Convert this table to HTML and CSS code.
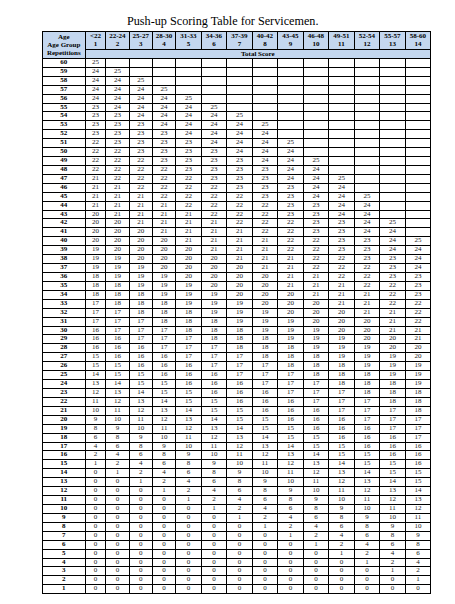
FILE: index.html
```html
<!DOCTYPE html>
<html lang="en">
<head>
<meta charset="utf-8">
<title>Push-up Scoring Table for Servicemen</title>
<link rel="stylesheet" href="styles.css">
</head>
<body>
<div class="page">
<h1 class="title">Push-up Scoring Table for Servicemen.</h1>
<table class="score">
<colgroup>
<col class="c-lab"><col class="c1"><col class="c2"><col class="c2"><col class="c2"><col class="c3"><col class="c3"><col class="c3"><col class="c3"><col class="c3"><col class="c3"><col class="c3"><col class="c3"><col class="c3"><col class="c3">
</colgroup>
<thead>
<tr><th class="corner" rowspan="2">Age<br>Age Group<br>Repetitions</th><th class="grp">&lt;22<br>1</th><th class="grp">22-24<br>2</th><th class="grp">25-27<br>3</th><th class="grp">28-30<br>4</th><th class="grp">31-33<br>5</th><th class="grp">34-36<br>6</th><th class="grp">37-39<br>7</th><th class="grp">40-42<br>8</th><th class="grp">43-45<br>9</th><th class="grp">46-48<br>10</th><th class="grp">49-51<br>11</th><th class="grp">52-54<br>12</th><th class="grp">55-57<br>13</th><th class="grp">58-60<br>14</th></tr>
<tr><th class="total" colspan="14">Total Score</th></tr>
</thead>
<tbody>
<tr><th>60</th><td>25</td><td></td><td></td><td></td><td></td><td></td><td></td><td></td><td></td><td></td><td></td><td></td><td></td><td></td></tr>
<tr><th>59</th><td>24</td><td>25</td><td></td><td></td><td></td><td></td><td></td><td></td><td></td><td></td><td></td><td></td><td></td><td></td></tr>
<tr><th>58</th><td>24</td><td>24</td><td>25</td><td></td><td></td><td></td><td></td><td></td><td></td><td></td><td></td><td></td><td></td><td></td></tr>
<tr><th>57</th><td>24</td><td>24</td><td>24</td><td>25</td><td></td><td></td><td></td><td></td><td></td><td></td><td></td><td></td><td></td><td></td></tr>
<tr><th>56</th><td>24</td><td>24</td><td>24</td><td>24</td><td>25</td><td></td><td></td><td></td><td></td><td></td><td></td><td></td><td></td><td></td></tr>
<tr><th>55</th><td>23</td><td>24</td><td>24</td><td>24</td><td>24</td><td>25</td><td></td><td></td><td></td><td></td><td></td><td></td><td></td><td></td></tr>
<tr><th>54</th><td>23</td><td>23</td><td>24</td><td>24</td><td>24</td><td>24</td><td>25</td><td></td><td></td><td></td><td></td><td></td><td></td><td></td></tr>
<tr><th>53</th><td>23</td><td>23</td><td>23</td><td>24</td><td>24</td><td>24</td><td>24</td><td>25</td><td></td><td></td><td></td><td></td><td></td><td></td></tr>
<tr><th>52</th><td>23</td><td>23</td><td>23</td><td>23</td><td>24</td><td>24</td><td>24</td><td>24</td><td></td><td></td><td></td><td></td><td></td><td></td></tr>
<tr><th>51</th><td>22</td><td>23</td><td>23</td><td>23</td><td>23</td><td>24</td><td>24</td><td>24</td><td>25</td><td></td><td></td><td></td><td></td><td></td></tr>
<tr><th>50</th><td>22</td><td>22</td><td>23</td><td>23</td><td>23</td><td>23</td><td>24</td><td>24</td><td>24</td><td></td><td></td><td></td><td></td><td></td></tr>
<tr><th>49</th><td>22</td><td>22</td><td>22</td><td>23</td><td>23</td><td>23</td><td>23</td><td>24</td><td>24</td><td>25</td><td></td><td></td><td></td><td></td></tr>
<tr><th>48</th><td>22</td><td>22</td><td>22</td><td>22</td><td>23</td><td>23</td><td>23</td><td>23</td><td>24</td><td>24</td><td></td><td></td><td></td><td></td></tr>
<tr><th>47</th><td>21</td><td>22</td><td>22</td><td>22</td><td>22</td><td>23</td><td>23</td><td>23</td><td>24</td><td>24</td><td>25</td><td></td><td></td><td></td></tr>
<tr><th>46</th><td>21</td><td>21</td><td>22</td><td>22</td><td>22</td><td>22</td><td>23</td><td>23</td><td>23</td><td>24</td><td>24</td><td></td><td></td><td></td></tr>
<tr><th>45</th><td>21</td><td>21</td><td>21</td><td>22</td><td>22</td><td>22</td><td>22</td><td>23</td><td>23</td><td>24</td><td>24</td><td>25</td><td></td><td></td></tr>
<tr><th>44</th><td>21</td><td>21</td><td>21</td><td>21</td><td>22</td><td>22</td><td>22</td><td>22</td><td>23</td><td>23</td><td>24</td><td>24</td><td></td><td></td></tr>
<tr><th>43</th><td>20</td><td>21</td><td>21</td><td>21</td><td>21</td><td>22</td><td>22</td><td>22</td><td>23</td><td>23</td><td>24</td><td>24</td><td></td><td></td></tr>
<tr><th>42</th><td>20</td><td>20</td><td>21</td><td>21</td><td>21</td><td>21</td><td>22</td><td>22</td><td>22</td><td>23</td><td>23</td><td>24</td><td>25</td><td></td></tr>
<tr><th>41</th><td>20</td><td>20</td><td>20</td><td>21</td><td>21</td><td>21</td><td>21</td><td>22</td><td>22</td><td>23</td><td>23</td><td>24</td><td>24</td><td></td></tr>
<tr><th>40</th><td>20</td><td>20</td><td>20</td><td>20</td><td>21</td><td>21</td><td>21</td><td>21</td><td>22</td><td>22</td><td>23</td><td>23</td><td>24</td><td>25</td></tr>
<tr><th>39</th><td>19</td><td>20</td><td>20</td><td>20</td><td>20</td><td>21</td><td>21</td><td>21</td><td>22</td><td>22</td><td>23</td><td>23</td><td>24</td><td>24</td></tr>
<tr><th>38</th><td>19</td><td>19</td><td>20</td><td>20</td><td>20</td><td>20</td><td>21</td><td>21</td><td>21</td><td>22</td><td>22</td><td>23</td><td>23</td><td>24</td></tr>
<tr><th>37</th><td>19</td><td>19</td><td>19</td><td>20</td><td>20</td><td>20</td><td>20</td><td>21</td><td>21</td><td>22</td><td>22</td><td>22</td><td>23</td><td>24</td></tr>
<tr><th>36</th><td>18</td><td>19</td><td>19</td><td>19</td><td>20</td><td>20</td><td>20</td><td>20</td><td>21</td><td>21</td><td>22</td><td>22</td><td>23</td><td>23</td></tr>
<tr><th>35</th><td>18</td><td>18</td><td>19</td><td>19</td><td>19</td><td>20</td><td>20</td><td>20</td><td>21</td><td>21</td><td>21</td><td>22</td><td>22</td><td>23</td></tr>
<tr><th>34</th><td>18</td><td>18</td><td>18</td><td>19</td><td>19</td><td>19</td><td>20</td><td>20</td><td>20</td><td>21</td><td>21</td><td>21</td><td>22</td><td>23</td></tr>
<tr><th>33</th><td>17</td><td>18</td><td>18</td><td>18</td><td>19</td><td>19</td><td>19</td><td>20</td><td>20</td><td>20</td><td>21</td><td>21</td><td>22</td><td>22</td></tr>
<tr><th>32</th><td>17</td><td>17</td><td>18</td><td>18</td><td>18</td><td>19</td><td>19</td><td>19</td><td>20</td><td>20</td><td>20</td><td>21</td><td>21</td><td>22</td></tr>
<tr><th>31</th><td>17</td><td>17</td><td>17</td><td>18</td><td>18</td><td>18</td><td>19</td><td>19</td><td>19</td><td>20</td><td>20</td><td>20</td><td>21</td><td>22</td></tr>
<tr><th>30</th><td>16</td><td>17</td><td>17</td><td>17</td><td>18</td><td>18</td><td>18</td><td>19</td><td>19</td><td>19</td><td>20</td><td>20</td><td>21</td><td>21</td></tr>
<tr><th>29</th><td>16</td><td>16</td><td>17</td><td>17</td><td>17</td><td>18</td><td>18</td><td>18</td><td>19</td><td>19</td><td>19</td><td>20</td><td>20</td><td>21</td></tr>
<tr><th>28</th><td>16</td><td>16</td><td>16</td><td>17</td><td>17</td><td>17</td><td>18</td><td>18</td><td>18</td><td>19</td><td>19</td><td>19</td><td>20</td><td>20</td></tr>
<tr><th>27</th><td>15</td><td>16</td><td>16</td><td>16</td><td>17</td><td>17</td><td>17</td><td>18</td><td>18</td><td>18</td><td>19</td><td>19</td><td>19</td><td>20</td></tr>
<tr><th>26</th><td>15</td><td>15</td><td>16</td><td>16</td><td>16</td><td>17</td><td>17</td><td>17</td><td>18</td><td>18</td><td>18</td><td>19</td><td>19</td><td>19</td></tr>
<tr><th>25</th><td>14</td><td>15</td><td>15</td><td>16</td><td>16</td><td>16</td><td>17</td><td>17</td><td>17</td><td>18</td><td>18</td><td>18</td><td>19</td><td>19</td></tr>
<tr><th>24</th><td>13</td><td>14</td><td>15</td><td>15</td><td>16</td><td>16</td><td>16</td><td>17</td><td>17</td><td>17</td><td>18</td><td>18</td><td>18</td><td>19</td></tr>
<tr><th>23</th><td>12</td><td>13</td><td>14</td><td>15</td><td>15</td><td>16</td><td>16</td><td>16</td><td>17</td><td>17</td><td>17</td><td>18</td><td>18</td><td>18</td></tr>
<tr><th>22</th><td>11</td><td>12</td><td>13</td><td>14</td><td>15</td><td>15</td><td>16</td><td>16</td><td>16</td><td>17</td><td>17</td><td>17</td><td>18</td><td>18</td></tr>
<tr><th>21</th><td>10</td><td>11</td><td>12</td><td>13</td><td>14</td><td>15</td><td>15</td><td>16</td><td>16</td><td>16</td><td>17</td><td>17</td><td>17</td><td>18</td></tr>
<tr><th>20</th><td>9</td><td>10</td><td>11</td><td>12</td><td>13</td><td>14</td><td>15</td><td>15</td><td>16</td><td>16</td><td>16</td><td>17</td><td>17</td><td>17</td></tr>
<tr><th>19</th><td>8</td><td>9</td><td>10</td><td>11</td><td>12</td><td>13</td><td>14</td><td>15</td><td>15</td><td>16</td><td>16</td><td>16</td><td>17</td><td>17</td></tr>
<tr><th>18</th><td>6</td><td>8</td><td>9</td><td>10</td><td>11</td><td>12</td><td>13</td><td>14</td><td>15</td><td>15</td><td>16</td><td>16</td><td>16</td><td>17</td></tr>
<tr><th>17</th><td>4</td><td>6</td><td>8</td><td>9</td><td>10</td><td>11</td><td>12</td><td>13</td><td>14</td><td>15</td><td>15</td><td>16</td><td>16</td><td>16</td></tr>
<tr><th>16</th><td>2</td><td>4</td><td>6</td><td>8</td><td>9</td><td>10</td><td>11</td><td>12</td><td>13</td><td>14</td><td>15</td><td>15</td><td>16</td><td>16</td></tr>
<tr><th>15</th><td>1</td><td>2</td><td>4</td><td>6</td><td>8</td><td>9</td><td>10</td><td>11</td><td>12</td><td>13</td><td>14</td><td>15</td><td>15</td><td>16</td></tr>
<tr><th>14</th><td>0</td><td>1</td><td>2</td><td>4</td><td>6</td><td>8</td><td>9</td><td>10</td><td>11</td><td>12</td><td>13</td><td>14</td><td>15</td><td>15</td></tr>
<tr><th>13</th><td>0</td><td>0</td><td>1</td><td>2</td><td>4</td><td>6</td><td>8</td><td>9</td><td>10</td><td>11</td><td>12</td><td>13</td><td>14</td><td>15</td></tr>
<tr><th>12</th><td>0</td><td>0</td><td>0</td><td>1</td><td>2</td><td>4</td><td>6</td><td>8</td><td>9</td><td>10</td><td>11</td><td>12</td><td>13</td><td>14</td></tr>
<tr><th>11</th><td>0</td><td>0</td><td>0</td><td>0</td><td>1</td><td>2</td><td>4</td><td>6</td><td>8</td><td>9</td><td>10</td><td>11</td><td>12</td><td>13</td></tr>
<tr><th>10</th><td>0</td><td>0</td><td>0</td><td>0</td><td>0</td><td>1</td><td>2</td><td>4</td><td>6</td><td>8</td><td>9</td><td>10</td><td>11</td><td>12</td></tr>
<tr><th>9</th><td>0</td><td>0</td><td>0</td><td>0</td><td>0</td><td>0</td><td>1</td><td>2</td><td>4</td><td>6</td><td>8</td><td>9</td><td>10</td><td>11</td></tr>
<tr><th>8</th><td>0</td><td>0</td><td>0</td><td>0</td><td>0</td><td>0</td><td>0</td><td>1</td><td>2</td><td>4</td><td>6</td><td>8</td><td>9</td><td>10</td></tr>
<tr><th>7</th><td>0</td><td>0</td><td>0</td><td>0</td><td>0</td><td>0</td><td>0</td><td>0</td><td>1</td><td>2</td><td>4</td><td>6</td><td>8</td><td>9</td></tr>
<tr><th>6</th><td>0</td><td>0</td><td>0</td><td>0</td><td>0</td><td>0</td><td>0</td><td>0</td><td>0</td><td>1</td><td>2</td><td>4</td><td>6</td><td>8</td></tr>
<tr><th>5</th><td>0</td><td>0</td><td>0</td><td>0</td><td>0</td><td>0</td><td>0</td><td>0</td><td>0</td><td>0</td><td>1</td><td>2</td><td>4</td><td>6</td></tr>
<tr><th>4</th><td>0</td><td>0</td><td>0</td><td>0</td><td>0</td><td>0</td><td>0</td><td>0</td><td>0</td><td>0</td><td>0</td><td>1</td><td>2</td><td>4</td></tr>
<tr><th>3</th><td>0</td><td>0</td><td>0</td><td>0</td><td>0</td><td>0</td><td>0</td><td>0</td><td>0</td><td>0</td><td>0</td><td>0</td><td>1</td><td>2</td></tr>
<tr><th>2</th><td>0</td><td>0</td><td>0</td><td>0</td><td>0</td><td>0</td><td>0</td><td>0</td><td>0</td><td>0</td><td>0</td><td>0</td><td>0</td><td>1</td></tr>
<tr><th>1</th><td>0</td><td>0</td><td>0</td><td>0</td><td>0</td><td>0</td><td>0</td><td>0</td><td>0</td><td>0</td><td>0</td><td>0</td><td>0</td><td>0</td></tr>
</tbody>
</table>
</div>
</body>
</html>
```

FILE: styles.css
```css
html, body {
  margin: 0;
  padding: 0;
  background: #ffffff;
}

body {
  font-family: "Liberation Serif", "Times New Roman", "DejaVu Serif", serif;
  color: #000000;
}

.page {
  padding: 11px 0 0 42px;
  width: 389px;
}

.title {
  margin: 0;
  padding-left: 85px;
  font-family: "Liberation Serif", "Times New Roman", serif;
  font-size: 12.2px;
  font-weight: normal;
  line-height: 20px;
  white-space: nowrap;
}

.score {
  border-collapse: collapse;
  table-layout: fixed;
  width: 389px;
  border: 1.5px solid #000;
}

.c-lab { width: 42.6px; }
.c1 { width: 20.7px; }
.c2 { width: 23.3px; }
.c3 { width: 25.5px; }

.score th,
.score td {
  border: 1px solid #000;
  padding: 0;
  text-align: center;
  vertical-align: middle;
  font-size: 7px;
  line-height: 7.92px;
  height: 7.92px;
  overflow: hidden;
  white-space: nowrap;
}

.score td {
  font-weight: normal;
  color: #1a1a1a;
}

.score tbody th {
  font-weight: bold;
}

.score thead th {
  background: #c4d7ef;
  font-weight: bold;
  font-size: 7px;
  line-height: 8.3px;
  height: auto;
}

.score thead .total {
  height: 8.3px;
}
```
